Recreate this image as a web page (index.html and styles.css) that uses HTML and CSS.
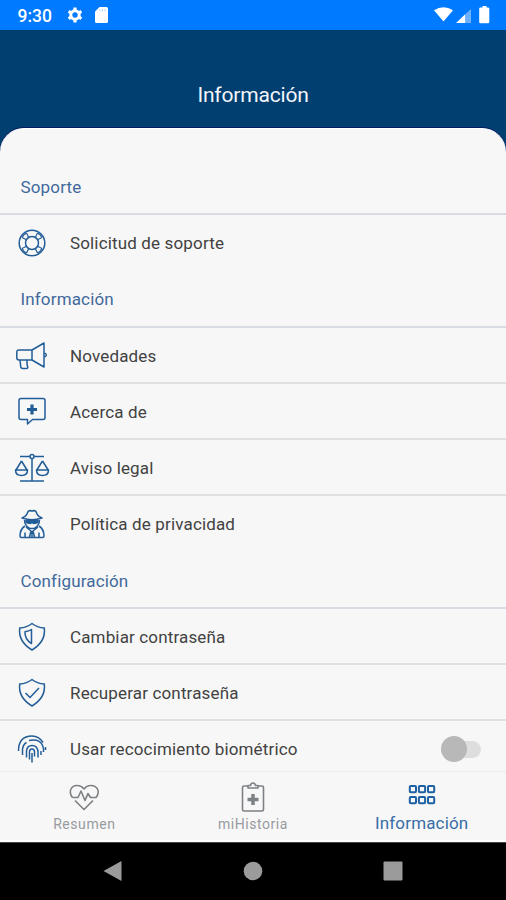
FILE: index.html
```html
<!DOCTYPE html>
<html lang="es">
<head>
<meta charset="utf-8">
<title>Información</title>
<link rel="stylesheet" href="styles.css">
</head>
<body>
<div class="phone">
  <div class="status">
    <span class="clock">9:30</span>
    <svg class="gear" width="16" height="16" viewBox="0 0 16 16"><g fill="none" stroke="#fff"><circle cx="8" cy="8" r="4.200" stroke-width="3"/><path d="M8 .6v3M8 12.400v3M1.600 4.300l2.600 1.500M11.800 10.200l2.600 1.500M1.600 11.700l2.600-1.500M11.800 5.800l2.600-1.500" stroke-width="3.200"/></g></svg>
    <svg class="sd" width="13" height="16" viewBox="0 0 13 16"><path fill="#fff" d="M4.500 0h7Q13 0 13 1.500v13q0 1.500-1.500 1.500h-10Q0 16 0 14.500V4.500z"/><path d="M5 2v2.500M7.500 2v2.500M10 2v2.500" stroke="#b8d8ff"/></svg>
    <svg class="signal" width="58" height="18" viewBox="0 0 58 18"><path fill="#fff" d="M1 4.200Q10.500 -1.800 20 4.200L10.500 15.500z"/><path fill="#fff" d="M23 17L32.500 8v9z"/><path fill="#6db0ff" d="M32.500 8l5.500-5v14h-5.500z"/><path fill="#fff" d="M49.500 0h4v1.500H55q1.300 0 1.300 1.300V16q0 1.300-1.300 1.300h-7.500q-1.300 0-1.300-1.300V2.800q0-1.300 1.300-1.300h2z"/></svg>
  </div>
  <header class="top"><h1>Información</h1></header>
  <main class="sheet">
    <h2>Soporte</h2>
    <div class="row">
      <svg class="icon" viewBox="0 0 36 36"><circle cx="18" cy="18" r="12.800"/><circle cx="18" cy="18" r="6.500"/><path d="M8 12.500q1.500-3 4.500-4.500M23.500 8q3 1.500 4.500 4.500M28 23.500q-1.500 3-4.500 4.500M12.500 28q-3-1.500-4.500-4.500M8 12.500l5 2.500M12.500 8l2.500 5M28 12.500L23 15M23.500 8L21 13M8 23.500l5-2.500M12.500 28l2.500-5M28 23.500L23 21M23.500 28L21 23" stroke-width="1.200"/></svg>
      <span>Solicitud de soporte</span>
    </div>
    <h2>Información</h2>
    <div class="row line">
      <svg class="icon" viewBox="0 0 36 36"><path d="M18 12H5q-2.200 0-2.200 2.200v5.600Q2.800 22 5 22h13l12 7V5zM18 12v10M31 15q2.500 2 0 4M6 22l.7 6.500q.2 2 2.200 2h3.600q1.500 0 1.200-1.600L13 26v-4"/></svg>
      <span>Novedades</span>
    </div>
    <div class="row line">
      <svg class="icon" viewBox="0 0 36 36"><path d="M7 4.500h22q2 0 2 2v17q0 2-2 2H18.500L13.500 30v-4.500H7q-2 0-2-2v-17q0-2 2-2z"/><path class="bold" d="M18 10.500v10M13 15.500h10"/></svg>
      <span>Acerca de</span>
    </div>
    <div class="row line">
      <svg class="icon" viewBox="0 0 36 36"><circle cx="18" cy="6.500" r="2"/><path d="M6 6.500h10M20 6.500h10M18 8.500V31M6 31h24M7.500 11L1.700 20.500M7.500 11l5.800 9.500M28.500 11l-6 9.500M28.500 11l6 9.500"/><path d="M1.500 20q0 5.500 6 5.500t6-5.500zM22.500 20q0 5.500 6 5.500t6-5.500z"/></svg>
      <span>Aviso legal</span>
    </div>
    <div class="row">
      <svg class="icon" viewBox="0 0 36 36"><path d="M8 12Q12 10.500 13 8q1-3.500 3-3.500 2 1 4 0 2 0 3 3.500 1 2.500 5 4-10 3.500-20 0zM10.500 14q0 3 1.500 5 2 3.500 6 3.500t6-3.500q1.500-2 1.500-5M11 20Q6 23 6 30q0 1.500 1.500 1.500h21Q30 31.500 30 30q0-7-5-10M18 25v6M12 21l5 4-1.500 6M24 21l-5 4 1.500 6M11 26.500V31M25 26.500V31"/><path class="fill" d="M12 14.500h12v2l-4 1-2-1-2 1-4-1z"/></svg>
      <span>Política de privacidad</span>
    </div>
    <h2>Configuración</h2>
    <div class="row line">
      <svg class="icon" viewBox="0 0 36 36"><path d="M18 4.500q5 4 12.300 4.500Q32 22.500 18 31 4 22.500 5.700 9 13 8.500 18 4.500z"/><path d="M17.500 10.500v14Q10.500 20 11 12.700q4-.5 6.500-2.200z"/></svg>
      <span>Cambiar contraseña</span>
    </div>
    <div class="row line">
      <svg class="icon" viewBox="0 0 36 36"><path d="M18 4.500q5 4 12.300 4.500Q32 22.500 18 31 4 22.500 5.700 9 13 8.500 18 4.500z"/><path d="M11.500 18l4.500 4.500 9-9.500"/></svg>
      <span>Recuperar contraseña</span>
    </div>
    <div class="row">
      <svg class="icon" viewBox="0 0 36 36"><path d="M4.500 20Q4.500 5 18 5q7 0 11 6.500M15 9.500q13-2.500 14.500 8.500v3M8.500 24v-5.500q.5-5 4-7M12.500 26.500V20q.5-5.500 5.500-5.500t6 5.500v6.500M15.500 28.500V21q0-3 2.500-3t2.500 3v4.500M18 22v9.500M27 20v4M31.500 16v3"/></svg>
      <span>Usar recocimiento biométrico</span>
      <span class="switch"><span class="knob"></span></span>
    </div>
  </main>
  <nav class="tabs">
    <div class="tab">
      <svg width="32" height="30" viewBox="0 0 32 30"><path d="M4.500 14.500Q1 10 3 6q2-4 7-3.500 3 0 6 3.500 3-3.500 6-3.500 5-.5 7.500 3.500 2 4-1.500 8.500H22.500l-2.500-4-3 7-4-9.500-3 6.500H4.500M7 17.500l9 9 9-9"/></svg>
      <span>Resumen</span>
    </div>
    <div class="tab">
      <svg width="32" height="30" viewBox="0 0 32 30"><path d="M11 3H7Q5.500 3 5.500 4.500v22Q5.500 28 7 28h18q1.500 0 1.500-1.500v-22Q26.500 3 25 3h-4M11 5V2.500h2.500q.5-2.500 2.500-2.500t2.500 2.500H21V5z"/><path class="cross" d="M16 11v11M10.500 16.500h11"/></svg>
      <span>miHistoria</span>
    </div>
    <div class="tab active">
      <svg width="32" height="30" viewBox="0 0 32 30"><rect x="3.800" y="3" width="6.200" height="6.200" rx="1"/><rect x="12.900" y="3" width="6.200" height="6.200" rx="1"/><rect x="22" y="3" width="6.200" height="6.200" rx="1"/><rect x="3.800" y="14" width="6.200" height="6.200" rx="1"/><rect x="12.900" y="14" width="6.200" height="6.200" rx="1"/><rect x="22" y="14" width="6.200" height="6.200" rx="1"/></svg>
      <span>Información</span>
    </div>
  </nav>
  <div class="system">
    <svg width="20" height="22" viewBox="0 0 20 22"><path d="M.5 11L18.500 1v20z"/></svg>
    <svg width="20" height="22" viewBox="0 0 20 22"><circle cx="10" cy="11" r="9.300"/></svg>
    <svg width="20" height="22" viewBox="0 0 20 22"><rect x=".5" y="1.500" width="19" height="19" rx="1"/></svg>
  </div>
</div>
</body>
</html>
```

FILE: styles.css
```css
* { box-sizing: border-box; }
body { margin: 0; font-family: Roboto, sans-serif; }
.phone { width: 506px; height: 900px; overflow: hidden; display: flex; flex-direction: column; background: #003f70; }
.status { flex: none; height: 30px; background: #007aff; display: flex; align-items: center; padding: 0 15px 0 17.500px; }
.clock { color: #fff; font-size: 17.500px; font-weight: 500; width: 49px; padding-top: 2px; }
.sd { margin-left: 12px; }
.signal { margin-left: auto; }
.top { flex: none; height: 98px; display: flex; justify-content: center; padding-top: 52px; }
.top h1 { margin: 0; font-size: 21px; line-height: 26px; font-weight: 400; color: #f4f6fa; letter-spacing: -.18px; }
.sheet { flex: none; height: 643px; overflow: hidden; background: #f7f7f7; border-radius: 24px 24px 0 0; border-top: 1px solid #fff; box-shadow: 0 -1px 0 #001b62; padding-top: 29.800px; }
.sheet h2 { margin: 0; height: 56.250px; padding: 1px 0 0 20.500px; border-bottom: 2px solid #d9dce3; font-size: 17px; font-weight: 400; line-height: 55.500px; letter-spacing: .15px; color: #42699c; }
.row { height: 56.250px; display: flex; align-items: center; padding: 2px 25px 0 14px; border-bottom: 2px solid transparent; font-size: 17px; letter-spacing: .15px; color: #424242; }
.line { border-bottom-color: #e0e0e1; }
.row > span { white-space: nowrap; }
.icon { width: 36px; height: 36px; flex: none; margin-right: 20px; fill: none; stroke: #225d98; stroke-width: 1.500; stroke-linejoin: round; }
.icon .bold { stroke-width: 3.200; }
.icon .fill { fill: #225d98; }
.switch { margin-left: auto; width: 40px; height: 17px; display: flex; align-items: center; border-radius: 9px; background: #dedede; }
.knob { width: 26px; height: 26px; flex: none; border-radius: 50%; background: #b8b8b8; }
.tabs { flex: none; height: 71px; background: #f7f7f7; border-top: 1px solid #e9ebed; border-bottom: 2px solid #fff; display: grid; grid-template-columns: repeat(3, 1fr); }
.tab { display: flex; flex-direction: column; align-items: center; padding-top: 11px; color: #989b9f; font-size: 14px; line-height: 22px; letter-spacing: .55px; }
.tab svg { fill: none; stroke: #7d8084; stroke-width: 1.600; stroke-linejoin: round; overflow: visible; }
.tab .cross { stroke-width: 3.500; }
.active { color: #376da6; font-size: 17px; line-height: 21px; letter-spacing: .15px; }
.active svg { stroke: #1d60a4; stroke-width: 2; }
.system { flex: 1; background: #000; border-top: 1px solid #444; padding-bottom: 2px; display: grid; grid-template-columns: 140px 140px 140px; justify-content: center; justify-items: center; align-items: center; }
.system svg { fill: #9b9b9b; }
```
